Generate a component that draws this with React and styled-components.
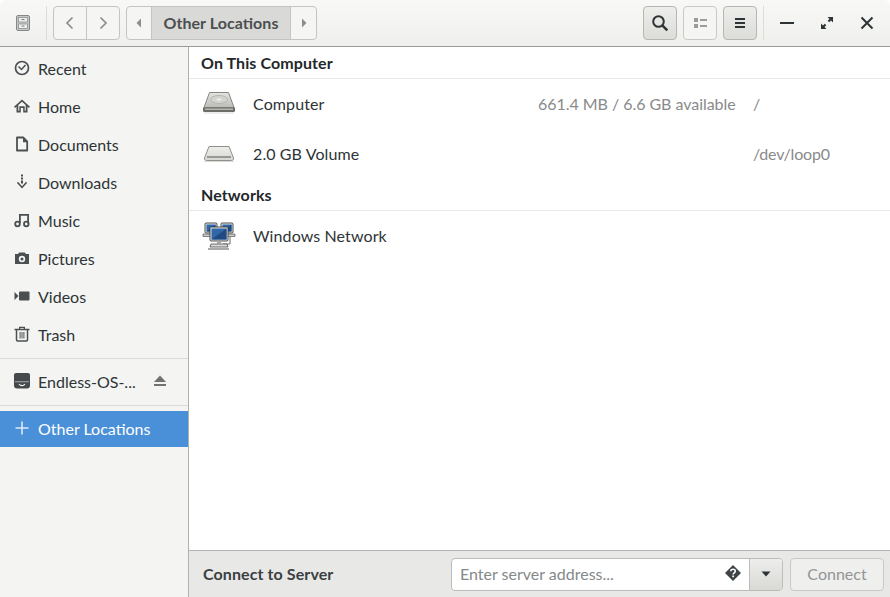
import React from 'react';
import styled, { createGlobalStyle } from 'styled-components';

const GlobalStyle = createGlobalStyle`
  html, body {
    margin: 0;
    padding: 0;
    background: #ffffff;
  }
  body {
    font-family: 'Lato', 'Liberation Sans', sans-serif;
    font-size: 16px;
    color: #2e3436;
    font-feature-settings: 'liga' 1;
  }
`;

const Win = styled.div`
  width: 890px;
  height: 597px;
  display: flex;
  flex-direction: column;
  overflow: hidden;
  border-radius: 6px 6px 0 0;
`;

const HeaderBar = styled.header`
  height: 46px;
  flex: none;
  box-sizing: content-box;
  display: flex;
  align-items: center;
  padding: 0 3px 0 16px;
  background: linear-gradient(#f8f8f7, #efefee);
  border-bottom: 1px solid #9c9c97;
`;

const Divider = styled.div`
  width: 1px;
  height: 34px;
  background: #dcdcd9;
  flex: none;
  margin-left: ${(p) => p.$left || 0}px;
  margin-right: ${(p) => p.$right || 0}px;
`;

const Group = styled.div`
  display: flex;
  height: 34px;
  box-sizing: border-box;
  border: 1px solid #c4c4c0;
  border-radius: 4px;
  overflow: hidden;
  margin-left: ${(p) => p.$left || 0}px;
  background: #f5f5f4;
`;

const Seg = styled.div`
  width: ${(p) => p.$w}px;
  display: flex;
  align-items: center;
  justify-content: center;
  color: #8b8e8f;
  & + & {
    border-left: 1px solid #c4c4c0;
  }
`;

const PathCurrent = styled(Seg)`
  background: #d9d9d7;
  font-weight: 700;
  color: #4b4f50;
  letter-spacing: 0.05px;
  padding-bottom: 2px;
  box-sizing: content-box;
`;

const ToolButton = styled.div`
  width: 34px;
  height: 34px;
  box-sizing: border-box;
  margin-left: ${(p) => p.$left || 0}px;
  border: 1px solid ${(p) => (p.$flat ? '#c9c9c5' : '#b7b7b2')};
  border-radius: 4px;
  background: ${(p) => (p.$flat ? '#f5f5f4' : 'linear-gradient(#ededeb, #dcdcd9)')};
  display: flex;
  align-items: center;
  justify-content: center;
  flex: none;
`;

const WinButton = styled.div`
  width: 40px;
  height: 34px;
  display: flex;
  align-items: center;
  justify-content: center;
  flex: none;
`;

const Spacer = styled.div`
  flex: 1;
`;

const Body = styled.div`
  flex: 1;
  display: flex;
  min-height: 0;
`;

const Sidebar = styled.nav`
  width: 188px;
  flex: none;
  box-sizing: content-box;
  background: #f4f4f3;
  border-right: 1px solid #b0b0ac;
  padding-top: 3px;
  color: #2e3436;
`;

const SideRow = styled.div`
  height: ${(p) => (p.$active ? 36 : 38)}px;
  box-sizing: border-box;
  display: flex;
  align-items: center;
  padding: 0 0 2px 14px;
  background: ${(p) => (p.$active ? '#4a90d9' : 'transparent')};
  color: ${(p) => (p.$active ? '#ffffff' : '#2e3436')};
`;

const SideIcon = styled.span`
  width: 16px;
  height: 16px;
  margin-right: 8px;
  flex: none;
  display: flex;
  color: ${(p) => (p.$active ? '#dbe9f7' : '#4a4f51')};
`;

const SideLabel = styled.span`
  flex: 1;
`;

const EjectIcon = styled.span`
  width: 14px;
  height: 14px;
  margin-right: 21px;
  display: flex;
  color: #6f7374;
`;

const SideSep = styled.div`
  height: 1px;
  background: #dcdcd9;
  margin-top: ${(p) => p.$top || 0}px;
  margin-bottom: ${(p) => p.$bottom || 0}px;
`;

const Main = styled.main`
  flex: 1;
  min-width: 0;
  display: flex;
  flex-direction: column;
`;

const Places = styled.div`
  flex: 1;
  background: #ffffff;
`;

const SectionTitle = styled.div`
  height: 31px;
  display: flex;
  align-items: center;
  padding-left: 12px;
  font-weight: 700;
  letter-spacing: 0.1px;
  color: #23282a;
  border-bottom: 1px solid #e8e8e6;
`;

const PlaceRow = styled.div`
  height: 50px;
  box-sizing: border-box;
  display: flex;
  align-items: center;
  padding: 0 0 2px 12px;
`;

const PlaceIcon = styled.span`
  width: 36px;
  height: 32px;
  flex: none;
  margin: 2px 16px 0 0;
  display: flex;
`;

const PlaceName = styled.span`
  width: 285px;
  flex: none;
  letter-spacing: 0.1px;
`;

const PlaceInfo = styled.span`
  width: 216px;
  flex: none;
  color: #888a8b;
  letter-spacing: -0.04px;
`;

const PlacePath = styled.span`
  color: #888a8b;
  margin-left: -1px;
  letter-spacing: -0.2px;
`;

const ServerBar = styled.div`
  height: 46px;
  flex: none;
  box-sizing: content-box;
  background: #e8e8e7;
  border-top: 1px solid #b5b5b1;
  display: flex;
  align-items: center;
  padding: 0 6px 0 14px;
`;

const ServerTitle = styled.span`
  font-weight: 700;
  letter-spacing: 0.1px;
  color: #3b4042;
  flex: 1;
  margin-top: -2px;
`;

const Combo = styled.div`
  display: flex;
  width: 332px;
  height: 33px;
  box-sizing: border-box;
  border: 1px solid #bcbcb8;
  border-radius: 4px;
  overflow: hidden;
  background: #ffffff;
`;

const ServerInput = styled.div`
  flex: 1;
  display: flex;
  align-items: center;
  justify-content: space-between;
  padding: 0 8px 2px 8px;
  color: #85898a;
`;

const ComboToggle = styled.div`
  width: 32px;
  flex: none;
  border-left: 1px solid #bcbcb8;
  background: linear-gradient(#ededeb, #d9d9d6);
  display: flex;
  align-items: center;
  justify-content: center;
`;

const ConnectButton = styled.div`
  width: 94px;
  height: 33px;
  margin-left: 7px;
  padding-bottom: 2px;
  box-sizing: border-box;
  border: 1px solid #c9c9c5;
  border-radius: 4px;
  background: #efefee;
  color: #929596;
  display: flex;
  align-items: center;
  justify-content: center;
`;

const I = ({ size = 16, children, fill = 'currentColor' }) => (
  <svg width={size} height={size} viewBox={`0 0 ${size} ${size}`} fill={fill}>
    {children}
  </svg>
);

const Stroke = { fill: 'none', stroke: 'currentColor', strokeWidth: 1.5 };

const RecentIcon = () => (
  <I>
    <circle cx="8" cy="8" r="6.500" {...Stroke} strokeWidth="1.700" />
    <path d="M4.500 6.500 7.500 9.500 11.500 5" {...Stroke} />
  </I>
);
const HomeIcon = () => (
  <I>
    <path d="M8 1.500 0 8.800l1.100 1.100L2.500 8.600V14.500h4.300V10h2.400v4.500h4.300V8.600l1.400 1.300L16 8.800 8 1.500zm3.700 11.300h-1V8.300H5.300v4.500h-1V7l3.700-3.300L11.700 7v5.800z" />
  </I>
);
const DocIcon = () => (
  <I>
    <path d="M3 1.500h6.200L13.200 5.600v8.900H3z" {...Stroke} strokeLinejoin="round" strokeWidth="1.800" />
    <path d="M9 1.500h1l3.500 3.500v1.300H9z" />
  </I>
);
const DownloadIcon = () => (
  <I>
    <path d="M7 .5h2v2H7zM7 3.500h2v2H7zM7 6.500h2v3H7z" />
    <path d="M2 9 8 14.500 14 9l-1.200-1.200L8 12.200 3.200 7.800z" transform="translate(1.300 0) scale(.84 1)" />
  </I>
);
const MusicIcon = () => (
  <I>
    <path d="M5 2h10v1.800H6.800V11H5zM13.200 2H15v9.500h-1.800z" />
    <circle cx="3.500" cy="12" r="2.300" {...Stroke} strokeWidth="1.800" />
    <circle cx="12.300" cy="12" r="2.300" {...Stroke} strokeWidth="1.800" />
  </I>
);
const CameraIcon = () => (
  <I>
    <path
      fillRule="evenodd"
      d="M1 4h3l1.200-1.500h5.600L12 4h3v10H1zM8 5.800a3.200 3.200 0 1 0 0 6.400 3.200 3.200 0 0 0 0-6.400zm0 1.700a1.500 1.500 0 1 1 0 3 1.500 1.500 0 0 1 0-3z"
    />
  </I>
);
const VideoIcon = () => (
  <I>
    <rect x="5" y="3.500" width="10.500" height="9" rx="1" />
    <path d="M.5 4 4.500 8 .5 12z" />
  </I>
);
const TrashIcon = () => (
  <I>
    <path d="M.5 2.800h15v1.400H.5zM5 .8h6v2.500H9.700V2.100H6.300v1.200H5z" />
    <path d="M2.500 4v9.800c0 .7.500 1.200 1.200 1.200h8.600c.7 0 1.200-.5 1.200-1.200V4" {...Stroke} />
    <path d="M5.600 6h1v6.500h-1zM7.500 6h1v6.500h-1zM9.400 6h1v6.500h-1z" />
  </I>
);
const DriveIcon = () => (
  <I>
    <path d="M2 0h12a2 2 0 0 1 2 2v10.500a3 3 0 0 1-3 3H3a3 3 0 0 1-3-3V2a2 2 0 0 1 2-2z" fill="#45494b" />
    <path d="M1 8h14v1.300H1z" fill="#8f9394" />
    <path d="M5 11c1.500 2.200 4.500 2.200 6 0" fill="none" stroke="#f4f4f3" strokeWidth="1.100" />
  </I>
);
const EjectGlyph = () => (
  <I size={14}>
    <path d="M7 1.500 13 8H1zM1 10h12v2H1z" />
  </I>
);
const PlusIcon = () => (
  <I>
    <path d="M7.200 1.500h1.600v5.700h5.700v1.600H8.800v5.700H7.200V8.800H1.500V7.200h5.700z" />
  </I>
);

const HardDisk = () => (
  <svg width="36" height="32" viewBox="0 0 36 32">
    <defs>
      <linearGradient id="hd" x1="0" y1="0" x2="0" y2="1">
        <stop offset="0" stopColor="#e4e4e1" />
        <stop offset="1" stopColor="#bcbdb9" />
      </linearGradient>
    </defs>
    <path d="M8.500 4.500h19l5.500 15H3z" fill="url(#hd)" stroke="#85867f" />
    <ellipse cx="18" cy="11.500" rx="8.500" ry="4" fill="#d3d4cf" stroke="#b5b6b1" />
    <ellipse cx="18" cy="11.500" rx="2.500" ry="1" fill="#eeeeeb" />
    <path d="M2 19.500h32v3a1.500 1.500 0 0 1-1.500 1.500h-29A1.500 1.500 0 0 1 2 22.500z" fill="#6c6e69" />
    <path d="M4 20.500h28v1.500H4z" fill="#b4b5b0" />
    <path d="M3 24.500h30v1H3z" fill="#dcdcd9" />
  </svg>
);

const Volume = () => (
  <svg width="36" height="32" viewBox="0 0 36 32">
    <defs>
      <linearGradient id="vol" x1="0" y1="0" x2="0" y2="1">
        <stop offset="0" stopColor="#eeeeeb" />
        <stop offset="1" stopColor="#d6d6d2" />
      </linearGradient>
    </defs>
    <path d="M8 8.500h20l4.500 11.500a2 2 0 0 1-2 2.500h-25a2 2 0 0 1-2-2.500z" fill="url(#vol)" stroke="#8f908b" />
    <path d="M6 18.500h24v1H6z" fill="#55564f" />
    <path d="M3 23h30v1H3z" fill="#dadad7" />
  </svg>
);

const Screen = ({ x, y, w, h }) => (
  <g>
    <rect x={x} y={y} width={w} height={h} rx="1" fill="#e3e4e2" stroke="#3a3d40" strokeWidth=".9" />
    <rect x={x + 1.500} y={y + 1.500} width={w - 3} height={h - 3} fill="#2f67a8" />
    <path d={`M${x + 1.500} ${y + h - 1.500}L${x + w - 1.500} ${y + 1.500}V${y + h - 1.500}z`} fill="#1f4a83" />
  </g>
);

const NetworkIcon = () => (
  <svg width="36" height="32" viewBox="0 0 36 32">
    <Screen x={4} y={3} w={12} h={10} />
    <Screen x={20} y={3} w={12} h={10} />
    <path d="M2 14h13v2.500H2zM21 14h13v2.500H21z" fill="#c9cac7" stroke="#55575a" strokeWidth=".7" />
    <path d="M29 17v7h-7" fill="none" stroke="#6b6d6e" strokeWidth="1" />
    <Screen x={9} y={7} w={18} h={14} />
    <path d="M16 21h4v2.500h-4z" fill="#a8a9a6" />
    <path d="M10 24h16l1 3h-18z" fill="#dadad7" stroke="#4b4d4e" strokeWidth=".8" />
    <path d="M7 29h21" stroke="#55575a" strokeWidth="1.200" />
  </svg>
);

const SIDE_ITEMS = [
  ['Recent', RecentIcon],
  ['Home', HomeIcon],
  ['Documents', DocIcon],
  ['Downloads', DownloadIcon],
  ['Music', MusicIcon],
  ['Pictures', CameraIcon],
  ['Videos', VideoIcon],
  ['Trash', TrashIcon],
];

const App = () => {
  return (
    <Win>
      <GlobalStyle />
      <HeaderBar>
        <svg width="14" height="16" viewBox="0 0 14 16">
          <rect x=".5" y=".5" width="13" height="15" rx="1.500" fill="#c6c7c5" stroke="#85888a" />
          <rect x="2.500" y="2.500" width="9" height="4.500" fill="#eeeeec" stroke="#8d9091" strokeWidth=".8" />
          <rect x="2.500" y="9" width="9" height="4.500" fill="#eeeeec" stroke="#8d9091" strokeWidth=".8" />
          <path d="M5.500 4.500h3M5.500 11h3" stroke="#6b6e70" strokeWidth=".9" />
        </svg>
        <Divider $left={16} />
        <Group $left={6}>
          <Seg $w={32}>
            <I>
              <path d="M10.500 2.500 5 8l5.500 5.500" fill="none" stroke="currentColor" strokeWidth="1.700" />
            </I>
          </Seg>
          <Seg $w={32}>
            <I>
              <path d="M5.500 2.500 11 8l-5.500 5.500" fill="none" stroke="currentColor" strokeWidth="1.700" />
            </I>
          </Seg>
        </Group>
        <Group $left={6}>
          <Seg $w={24}>
            <I>
              <path d="M10 3.500v9L5.500 8z" />
            </I>
          </Seg>
          <PathCurrent $w={138}>Other Locations</PathCurrent>
          <Seg $w={25}>
            <I>
              <path d="M6 3.500v9L10.500 8z" />
            </I>
          </Seg>
        </Group>
        <Spacer />
        <ToolButton>
          <I size={18}>
            <circle cx="7.500" cy="7.500" r="5.300" fill="none" stroke="#2e3436" strokeWidth="2" />
            <path d="m11.300 11.300 5 5" stroke="#2e3436" strokeWidth="2.600" />
          </I>
        </ToolButton>
        <ToolButton $left={6} $flat>
          <I>
            <path d="M2 3h4v4H2zM2 9h4v4H2z" fill="#9a9c9d" />
            <path d="M8 4h7v2H8zM8 10h7v2H8z" fill="#9a9c9d" />
          </I>
        </ToolButton>
        <ToolButton $left={6}>
          <I>
            <path d="M3 3h10v2H3zM3 7h10v2H3zM3 11h10v2H3z" fill="#2e3436" />
          </I>
        </ToolButton>
        <Divider $left={6} $right={3} />
        <WinButton>
          <I>
            <path d="M1 7h14v2H1z" fill="#2e3436" />
          </I>
        </WinButton>
        <WinButton>
          <I>
            <path d="M8.500 2H14v5.500l-2-2-1.800 1.800-1.500-1.500L10.500 4zM7.500 14H2V8.500l2 2 1.800-1.800 1.500 1.500L5.500 12z" fill="#2e3436" />
          </I>
        </WinButton>
        <WinButton>
          <I>
            <path d="m2.500 2.500 11 11M13.500 2.500l-11 11" stroke="#2e3436" strokeWidth="2" />
          </I>
        </WinButton>
      </HeaderBar>
      <Body>
        <Sidebar>
          {SIDE_ITEMS.map(([label, Icon]) => (
            <SideRow key={label}>
              <SideIcon>
                <Icon />
              </SideIcon>
              <SideLabel>{label}</SideLabel>
            </SideRow>
          ))}
          <SideSep $top={4} $bottom={4} />
          <SideRow>
            <SideIcon>
              <DriveIcon />
            </SideIcon>
            <SideLabel>Endless-OS-...</SideLabel>
            <EjectIcon>
              <EjectGlyph />
            </EjectIcon>
          </SideRow>
          <SideSep $top={4} $bottom={5} />
          <SideRow $active>
            <SideIcon $active>
              <PlusIcon />
            </SideIcon>
            <SideLabel>Other Locations</SideLabel>
          </SideRow>
        </Sidebar>
        <Main>
          <Places>
            <SectionTitle>On This Computer</SectionTitle>
            <PlaceRow>
              <PlaceIcon>
                <HardDisk />
              </PlaceIcon>
              <PlaceName>Computer</PlaceName>
              <PlaceInfo>661.4 MB / 6.6 GB available</PlaceInfo>
              <PlacePath>/</PlacePath>
            </PlaceRow>
            <PlaceRow>
              <PlaceIcon>
                <Volume />
              </PlaceIcon>
              <PlaceName>2.0 GB Volume</PlaceName>
              <PlaceInfo />
              <PlacePath>/dev/loop0</PlacePath>
            </PlaceRow>
            <SectionTitle>Networks</SectionTitle>
            <PlaceRow>
              <PlaceIcon>
                <NetworkIcon />
              </PlaceIcon>
              <PlaceName>Windows Network</PlaceName>
            </PlaceRow>
          </Places>
          <ServerBar>
            <ServerTitle>Connect to Server</ServerTitle>
            <Combo>
              <ServerInput>
                Enter server address...
                <svg width="16" height="16" viewBox="0 0 16 16">
                  <path d="M8 0 16 8 8 16 0 8z" fill="#3f4446" />
                  <path d="M5.800 6.300C5.800 5 6.800 4.200 8 4.200s2.300.8 2.300 2c0 1.700-2.100 1.700-2.100 3.200" fill="none" stroke="#ffffff" strokeWidth="1.500" />
                  <rect x="7.300" y="10.500" width="1.700" height="1.700" fill="#ffffff" />
                </svg>
              </ServerInput>
              <ComboToggle>
                <svg width="12" height="8" viewBox="0 0 12 8">
                  <path d="M1.500 1.500h9L6 6.500z" fill="#2e3436" />
                </svg>
              </ComboToggle>
            </Combo>
            <ConnectButton>Connect</ConnectButton>
          </ServerBar>
        </Main>
      </Body>
    </Win>
  );
};

export default App;
